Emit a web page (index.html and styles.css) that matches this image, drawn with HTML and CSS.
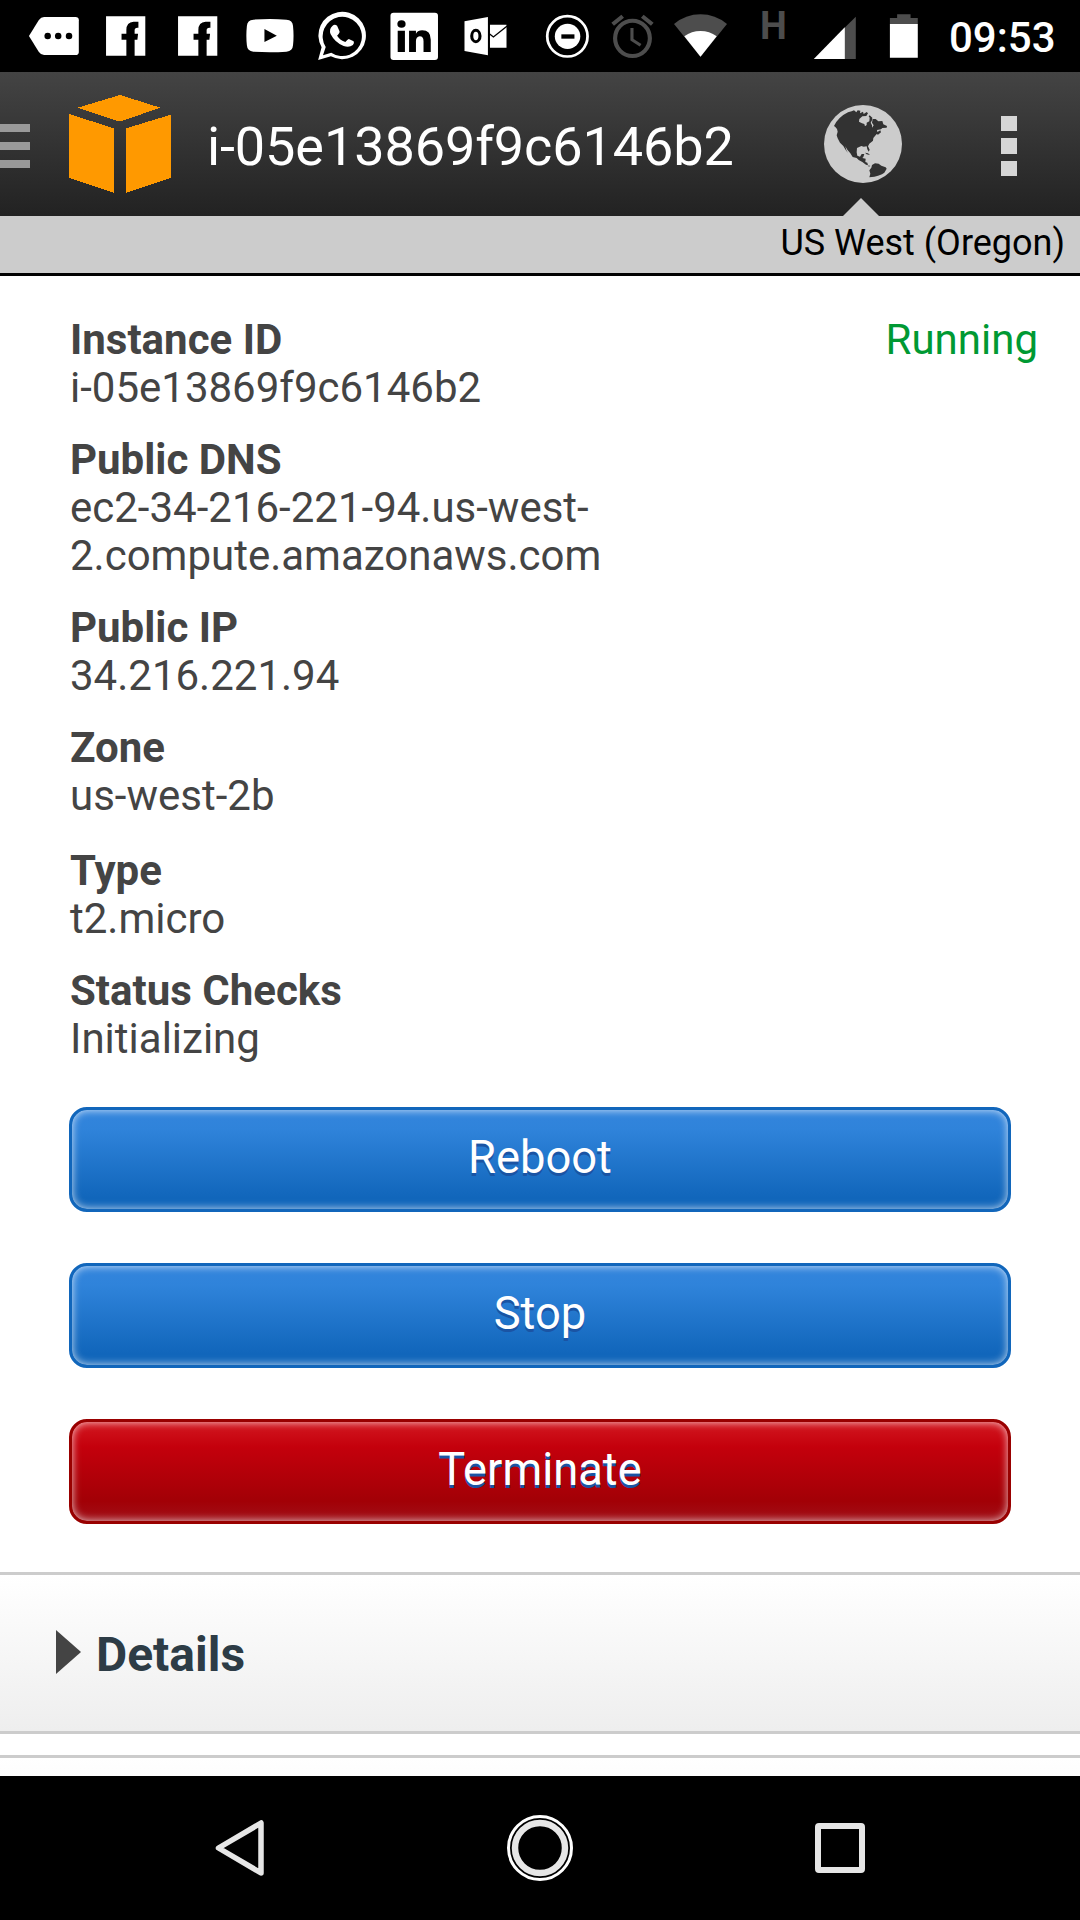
FILE: index.html
```html
<!DOCTYPE html>
<html lang="en">
<head>
<meta charset="utf-8">
<title>i-05e13869f9c6146b2</title>
<link rel="stylesheet" href="styles.css">
</head>
<body>
<div class="statusbar">
  <div class="notifications">
    <svg class="notif" viewBox="52.3 0 209.1 216" preserveAspectRatio="none"><path fill="#fff" d="M84 108L113 60Q119 51 128 51H219Q229 51 229 61V155Q229 165 219 165H128Q119 165 113 156Z"/><g fill="#000"><ellipse cx="138.500" cy="108" rx="9.500" ry="10"/><ellipse cx="169" cy="108" rx="9.500" ry="10"/><ellipse cx="200.500" cy="108" rx="9.500" ry="10"/></g></svg>
    <svg class="notif" viewBox="261.4 0 209.1 216" preserveAspectRatio="none"><path fill="#fff" d="M308 49H422V167H391V119H399L401 101H391V91Q391 83 399 83H402V65H388Q367 66 367 90V101H353V119H367V167H308Z"/></svg>
    <svg class="notif" viewBox="261.4 0 209.1 216" preserveAspectRatio="none"><path fill="#fff" d="M308 49H422V167H391V119H399L401 101H391V91Q391 83 399 83H402V65H388Q367 66 367 90V101H353V119H367V167H308Z"/></svg>
    <svg class="notif" viewBox="679.6 0 209.1 216" preserveAspectRatio="none"><path fill="#fff" fill-rule="evenodd" d="M736 59Q784 55 832 59Q850 60 851 78Q854 107 851 136Q850 153 832 155Q784 158 736 155Q718 153 717 136Q714 107 717 78Q718 60 736 59ZM768 87V126L804 107Z"/></svg>
    <svg class="notif" viewBox="888.7 0 209.1 216" preserveAspectRatio="none"><path fill="#fff" fill-rule="evenodd" d="M924 180L934 142A69 71 0 1 1 961 169ZM938 166L962 158A57 59 0 1 0 946 141Z"/><path fill="#fff" d="M966 77Q972 72 979 77L986 94Q988 98 979 107Q988 121 1003 126Q1009 118 1013 117L1027 124Q1030 129 1025 135Q1014 144 998 138Q973 128 960 102Q955 86 966 77Z"/></svg>
    <svg class="notif" viewBox="1097.8 0 209.1 216" preserveAspectRatio="none"><rect x="1134" y="38" width="138" height="142" rx="9" fill="#fff"/><ellipse cx="1166" cy="72" rx="12" ry="11.500"/><path d="M1155 92H1176V156H1155ZM1188 92H1208V101Q1214 91 1226 91Q1251 91 1251 119V156H1230V124Q1230 109 1219 109Q1208 110 1208 124V156H1188Z"/></svg>
    <svg class="notif" viewBox="1306.9 0 209.1 216" preserveAspectRatio="none"><path fill="#fff" d="M1349 64L1417 51V166L1349 153ZM1423 74H1471V143H1423Z"/><ellipse cx="1382" cy="108" rx="12" ry="17" fill="none" stroke="#000" stroke-width="9"/><path d="M1422 102L1433 111L1473 78" fill="none" stroke="#000" stroke-width="4"/></svg>
  </div>
  <div class="system">
    <svg class="dnd" viewBox="0 0 174.200 216" preserveAspectRatio="none"><ellipse cx="79.500" cy="109" rx="58.500" ry="60.500" fill="none" stroke="#fff" stroke-width="8"/><ellipse cx="80" cy="109" rx="37" ry="38" fill="#fff"/><path d="M62 103H100V116H62Z"/></svg>
    <svg class="alarm" viewBox="174.200 0 188.700 216" preserveAspectRatio="none"><g fill="none" stroke="#4d4d4d" stroke-width="12"><ellipse cx="268.500" cy="115" rx="50.500" ry="53"/><path d="M211 73L240 49M326 73L297 49"/><path stroke-width="9" d="M267 84V119L292 136"/></g></svg>
    <svg class="wifi" viewBox="362.900 0 209.100 216" preserveAspectRatio="none"><path fill="#4d4d4d" d="M466 170L389 72Q423 43 466 43T543 72Z"/><path fill="#fff" d="M466 170L419 109Q440 93 466 93T513 109Z"/></svg>
    <span class="network">H</span>
    <svg class="signal" viewBox="784 0 162.600 216" preserveAspectRatio="none"><path fill="#4d4d4d" d="M917 50V177H880V88Z"/><path fill="#fff" d="M795 177L885 82V177Z"/></svg>
    <svg class="battery" viewBox="946.600 0 203.300 216" preserveAspectRatio="none"><path fill="#4d4d4d" d="M1016 73V54H1037V43H1076V54H1097V73Z"/><path fill="#fff" d="M1016 72H1097V173H1016Z"/></svg>
    <span class="clock">09:53</span>
  </div>
</div>

<header class="appbar">
  <div class="drawer"><i></i><i></i><i></i></div>
  <svg class="cube" viewBox="207 75 306 294" shape-rendering="crispEdges"><path fill="#f90" d="M360 75L481 113L360 155L233 113ZM207 132L342 175V369L207 323ZM513 134V323L378 369V175Z"/></svg>
  <h1>i-05e13869f9c6146b2</h1>
  <svg class="globe" viewBox="252 105 234 234"><circle cx="369" cy="222" r="117" fill="#ccc"/><path fill="#323232" d="M282 168Q295 141 324 127L335 124L342 121L349 127L353 121L361 122L360 130L369 125L371 132L380 126L384 130L379 138L367 139L358 147L357 155L366 160L373 162L375 169L380 165L380 158L388 154L389 143L386 139L389 136L397 143L396 151L392 158L396 166L396 173L401 166L396 158L398 147L407 147L415 154L427 153L430 163L441 168L440 173L427 174L423 178L411 180L412 186L421 181L423 187L414 194L410 192L400 204L399 212L388 221L384 229L389 239L386 245L382 238L380 229L371 230L364 228L351 234L350 247L352 257L360 260L365 252L373 252L370 261L367 264L377 266L376 276L382 278L384 286L378 284L367 276L356 270L350 264L338 261L331 250L322 239L316 229L319 240L324 249L317 240L310 228L300 218L293 205L290 196L293 185L291 177L286 171Z"/><path fill="#323232" d="M396 285L405 280L416 281L424 287L437 292L440 296L433 308L426 313L414 317L403 320L388 322L391 311L388 301L394 293ZM375 248L384 250L390 255L380 253ZM385 286L391 288L386 290Z"/></svg>
  <div class="overflow"><i></i><i></i><i></i></div>
</header>
<div class="region">US West (Oregon)</div>

<main>
  <section class="instance">
    <dl class="facts">
      <div><dt>Instance ID</dt><dd>i-05e13869f9c6146b2</dd></div>
      <div><dt>Public DNS</dt><dd>ec2-34-216-221-94.us-west-<br>2.compute.amazonaws.com</dd></div>
      <div><dt>Public IP</dt><dd>34.216.221.94</dd></div>
      <div class="zone"><dt>Zone</dt><dd>us-west-2b</dd></div>
      <div><dt>Type</dt><dd>t2.micro</dd></div>
      <div><dt>Status Checks</dt><dd>Initializing</dd></div>
    </dl>
    <span class="state">Running</span>
  </section>
  <div class="actions">
    <button class="btn">Reboot</button>
    <button class="btn">Stop</button>
    <button class="btn danger">Terminate</button>
  </div>
  <div class="panel"><span class="arrow"></span><h2>Details</h2></div>
  <div class="panel next"></div>
</main>

<nav class="navbar">
  <svg viewBox="0 0 72 72"><path d="M57 11V61L14.500 36Z" fill="none" stroke="#e6e6e6" stroke-width="5.500" stroke-linejoin="round"/></svg>
  <svg viewBox="0 0 72 72"><circle cx="36" cy="36" r="31.500" fill="none" stroke="#fff" stroke-width="3"/><circle cx="36" cy="36" r="25" fill="none" stroke="#e6e6e6" stroke-width="6.500"/></svg>
  <svg viewBox="0 0 72 72"><rect x="14" y="14" width="44" height="44" rx="1" fill="none" stroke="#e6e6e6" stroke-width="6" stroke-linejoin="round"/></svg>
</nav>
</body>
</html>
```
FILE: styles.css
```css
* {
  box-sizing: border-box;
}

body {
  margin: 0;
  width: 1080px;
  height: 1920px;
  display: flex;
  flex-direction: column;
  overflow: hidden;
  background: #fff;
  color: #444;
  font-family: Roboto, sans-serif;
}

svg {
  display: block;
  flex: none;
}

h1, h2, dl, dd {
  margin: 0;
}

/* Android status bar */
.statusbar {
  height: 72px;
  flex: none;
  display: flex;
  justify-content: space-between;
  padding-left: 18px;
  background: #000;
}

.notifications, .system {
  display: flex;
}

.system {
  width: 540px;
}

.notif {
  width: 72px;
  height: 72px;
}

.dnd { width: 60px; height: 72px; }
.alarm { width: 65px; height: 72px; }
.wifi { width: 72px; height: 72px; }
.signal { width: 56px; height: 72px; }
.battery { width: 70px; height: 72px; }

.network {
  width: 73px;
  padding: 4px 0 0 23px;
  color: #4d4d4d;
  font-size: 38px;
  line-height: 44px;
  font-weight: 700;
}

.clock {
  padding-left: 13px;
  color: #fff;
  font-size: 42px;
  line-height: 75px;
  font-weight: 500;
}

/* Title bar */
.appbar {
  height: 144px;
  flex: none;
  display: flex;
  align-items: center;
  background: linear-gradient(#444, #222);
}

.drawer {
  width: 30px;
  display: grid;
  gap: 10px;
  padding-top: 4px;
}

.drawer i {
  height: 8px;
  background: #999;
}

.cube {
  width: 102px;
  height: 98px;
  margin-left: 39px;
}

.appbar h1 {
  width: 617px;
  margin-left: 36px;
  padding-top: 6px;
  color: #fff;
  font-size: 54px;
  line-height: 64px;
  font-weight: 400;
  letter-spacing: -.1px;
}

.globe {
  width: 78px;
  height: 78px;
}

.overflow {
  display: grid;
  gap: 7px;
  margin-left: 99px;
  padding-top: 4px;
}

.overflow i {
  width: 16px;
  height: 15.500px;
  background: #d6d6d6;
}

.region {
  position: relative;
  height: 60px;
  flex: none;
  padding-right: 15px;
  border-bottom: 3px solid #000;
  background: #ccc;
  color: #000;
  font-size: 36px;
  line-height: 55px;
  text-align: right;
}

.region::before {
  content: "";
  position: absolute;
  left: 843px;
  top: -18px;
  border: 18.500px solid transparent;
  border-top: 0;
  border-bottom: 18px solid #ccc;
}

/* Instance summary */
main {
  height: 1500px;
  flex: none;
  overflow: hidden;
}

.instance {
  height: 831px;
  display: flex;
  justify-content: space-between;
  padding: 40px 42px 0 70px;
  font-size: 42px;
  line-height: 48px;
}

.facts {
  display: flex;
  flex-direction: column;
  gap: 24px;
}

.facts .zone {
  margin-bottom: 3px;
}

.facts dt {
  font-weight: 700;
}

.state {
  color: #093;
}

.actions {
  display: grid;
  gap: 51px;
  padding: 0 69px;
}

.btn {
  height: 105px;
  padding: 0 0 3px;
  border: 3px solid #16b;
  border-radius: 18px;
  background: linear-gradient(#3385dd 0%, #2f83da 20%, #16b 88%);
  box-shadow: inset 0 0 9px rgba(255, 255, 255, .8);
  color: #fff;
  font: 400 45.300px/54px Roboto, sans-serif;
  text-shadow: 0 3px 0 #1a54a4;
}

.danger {
  border-color: #900;
  background: linear-gradient(#d31820 0%, #c4000c 25%, #a20006 80%, #a01018 100%);
}

/* Collapsible panels */
.panel {
  height: 162px;
  display: flex;
  align-items: center;
  margin-top: 48px;
  padding-left: 56px;
  border-top: 3px solid #ccc;
  border-bottom: 3px solid #ccc;
  background: linear-gradient(#fff, #eee);
}

.panel.next {
  margin-top: 21px;
}

.arrow {
  margin-bottom: 2px;
  border: 22.500px solid transparent;
  border-left: 25px solid #444;
  border-right: 0;
}

.panel h2 {
  margin-left: 15px;
  padding-top: 3px;
  color: #2d3c46;
  font-size: 48px;
  line-height: 56px;
}

/* Android navigation bar */
.navbar {
  height: 144px;
  flex: none;
  display: flex;
  align-items: center;
  justify-content: center;
  gap: 228px;
  background: #000;
}

.navbar svg {
  width: 72px;
  height: 72px;
}
```
